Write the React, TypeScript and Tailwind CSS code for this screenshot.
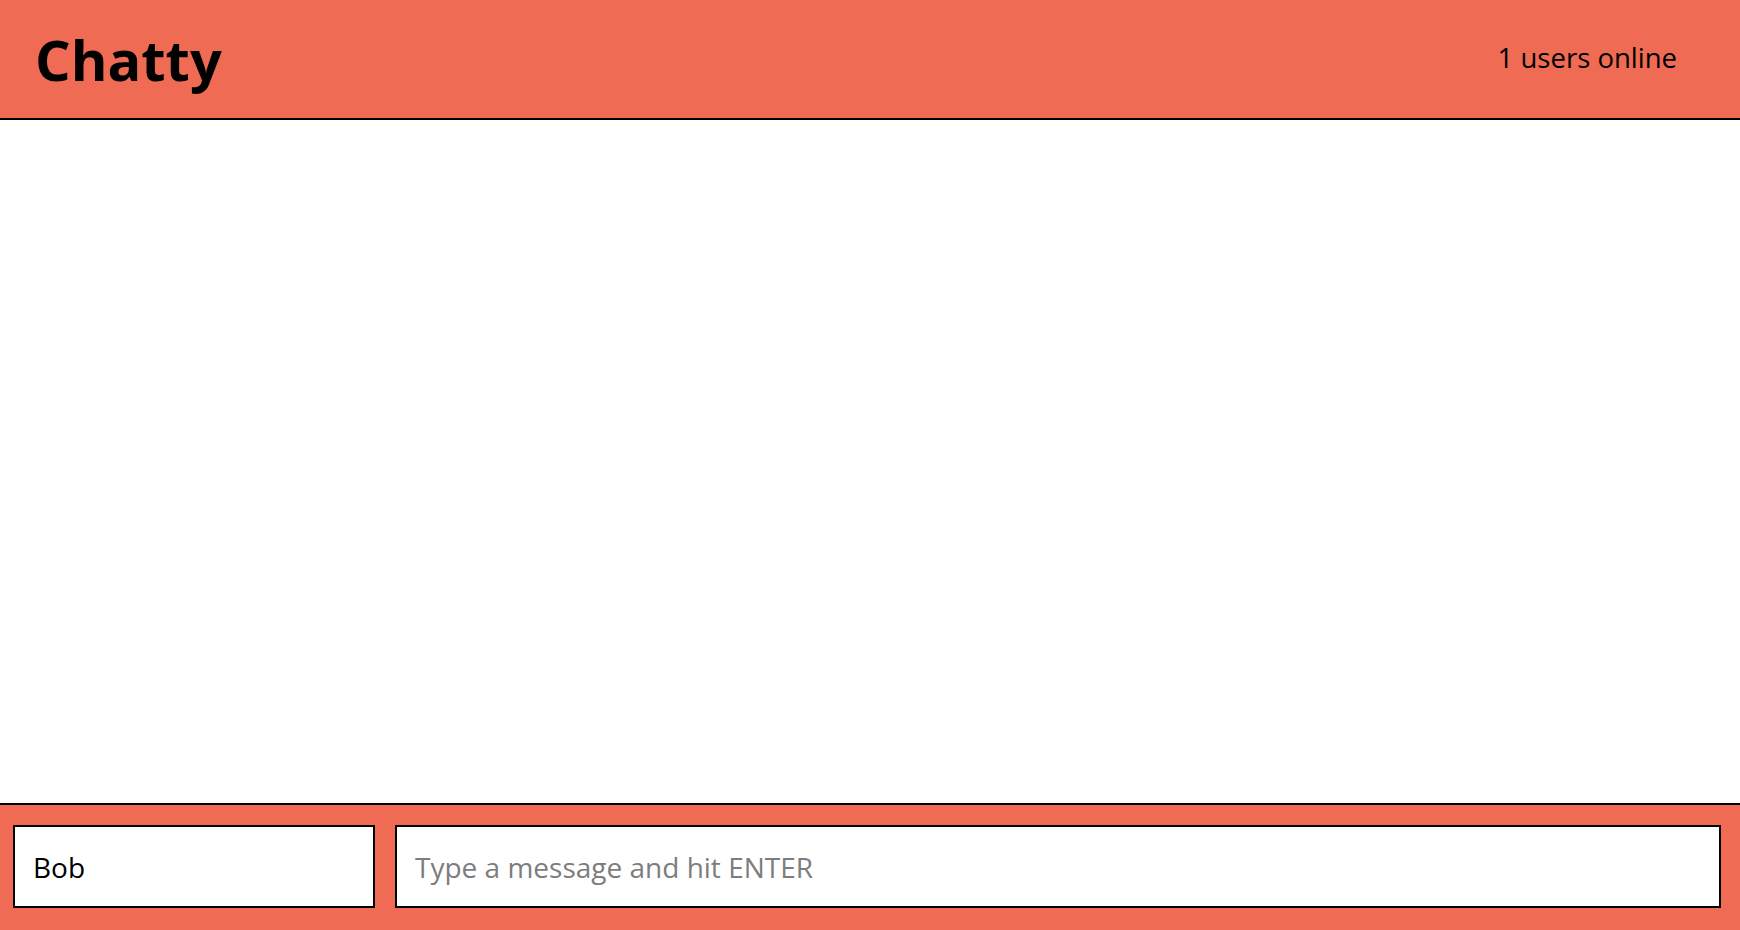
import { useState } from "react";

const fontStack = { fontFamily: '"Open Sans", "Noto Sans", sans-serif' };

function NavBar({ onlineCount }: { onlineCount: number }) {
  return (
    <nav className="flex h-[120px] shrink-0 items-center justify-between border-b-2 border-black bg-[#ef6b54] pl-[35px] pr-[63px]">
      <a href="/" className="text-[56px] font-bold leading-none text-black">
        Chatty
      </a>
      <span className="pb-[2px] text-[27.5px] text-black">
        {onlineCount} users online
      </span>
    </nav>
  );
}

function ChatBar() {
  const [username, setUsername] = useState("Bob");
  const [message, setMessage] = useState("");

  return (
    <footer className="flex h-[127px] shrink-0 border-t-2 border-black bg-[#ef6b54] pb-[22px] pl-[13px] pr-[19px] pt-[20px]">
      <input
        className="h-[83px] w-[362px] border-2 border-black bg-white px-[18px] text-[28px] text-black outline-none"
        value={username}
        onChange={(e) => setUsername(e.target.value)}
        placeholder="Your Name (Optional)"
        style={fontStack}
      />
      <input
        className="ml-[20px] h-[83px] min-w-0 flex-1 border-2 border-black bg-white px-[18px] text-[28px] text-black outline-none placeholder:text-[#7d7d7d]"
        value={message}
        onChange={(e) => setMessage(e.target.value)}
        placeholder="Type a message and hit ENTER"
        style={fontStack}
      />
    </footer>
  );
}

export default function App() {
  return (
    <div className="flex h-[930px] w-full flex-col bg-white" style={fontStack}>
      <NavBar onlineCount={1} />
      <main className="flex-1 overflow-y-auto" />
      <ChatBar />
    </div>
  );
}
